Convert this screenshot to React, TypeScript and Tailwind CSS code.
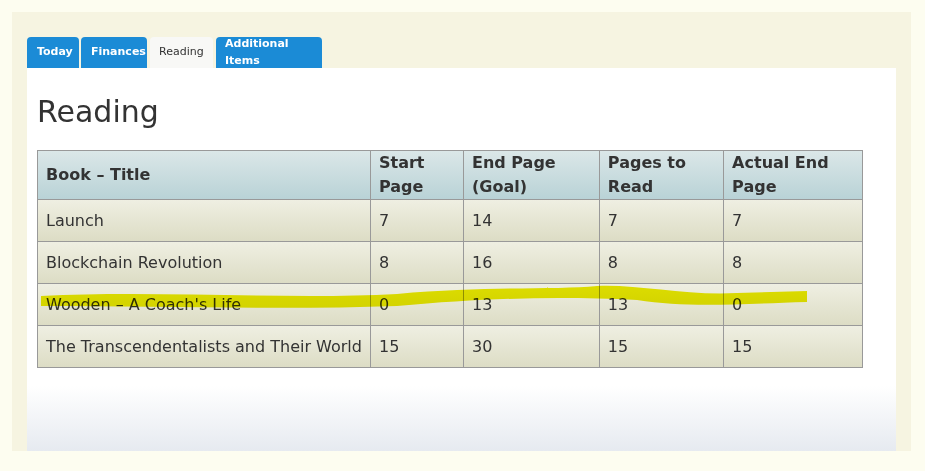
const headers = ["Book – Title", "Start Page", "End Page (Goal)", "Pages to Read", "Actual End Page"];
const rows = [
  ["Launch", "7", "14", "7", "7"],
  ["Blockchain Revolution", "8", "16", "8", "8"],
  ["Wooden – A Coach's Life", "0", "13", "13", "0"],
  ["The Transcendentalists and Their World", "15", "30", "15", "15"],
];
const widths = ["w-[326px]", "w-[94px]", "w-[138px]", "w-[126px]", "w-[141px]"];

export default function App() {
  return (
    <div className="w-[925px] h-[471px] bg-[#fdfdf0] p-[12px] pr-[14px] pb-[20px]" style={{ fontFamily: '"DejaVu Sans", sans-serif' }}>
      <div className="h-full bg-[#f6f4e1] pt-[25px] px-[15px] flex flex-col">
        <div className="flex items-end gap-[2px] h-[31px] text-[11px]">
          <div className="h-full px-[10px] flex items-center rounded-t bg-[#1b8bd6] text-white font-bold w-[52px]">Today</div>
          <div className="h-full px-[10px] flex items-center rounded-t bg-[#1b8bd6] text-white font-bold w-[66px] ml-0">Finances</div>
          <div className="h-full px-[9px] flex items-center rounded-t bg-[#f8f8f6] text-[#333] w-[63px] mx-[1px]">Reading</div>
          <div className="h-full px-[9px] flex items-center rounded-t bg-[#1b8bd6] text-white font-bold w-[106px]">Additional Items</div>
        </div>
        <div className="flex-1 bg-gradient-to-b from-white from-[83%] to-[#e6eaf0] px-[10px] pt-[26px] mr-[0px]">
          <h1 className="text-[30px] leading-[36px] text-[#333] mb-[20px]">Reading</h1>
          <div className="relative w-[826px]">
            <table className="border-collapse border border-[#999] text-[16px] text-[#333]">
              <thead>
                <tr className="bg-gradient-to-b from-[#dbe7e8] to-[#b8d2d6] h-[42px]">
                  {headers.map((h, i) => (
                    <th key={h} className={`${widths[i]} border border-[#999] text-left font-bold px-[8px] py-0`}>{h}</th>
                  ))}
                </tr>
              </thead>
              <tbody>
                {rows.map((r) => (
                  <tr key={r[0]} className="bg-gradient-to-b from-[#efefe2] to-[#dcdcc4] h-[42px]">
                    {r.map((c, i) => (
                      <td key={i} className="border border-[#999] px-[8px] py-0 whitespace-nowrap">{c}</td>
                    ))}
                  </tr>
                ))}
              </tbody>
            </table>
            <svg className="absolute left-0 top-0 pointer-events-none mix-blend-multiply" width="826" height="220">
              <path d="M4 146 C 120 140 250 150 360 144 C 450 136 520 140 560 136 C 600 134 650 146 700 143 L 770 141 L 770 152 C 700 154 650 158 600 150 C 520 146 450 148 360 156 C 250 160 120 156 4 156 Z" fill="#ecec00" />
            </svg>
          </div>
        </div>
      </div>
    </div>
  );
}
